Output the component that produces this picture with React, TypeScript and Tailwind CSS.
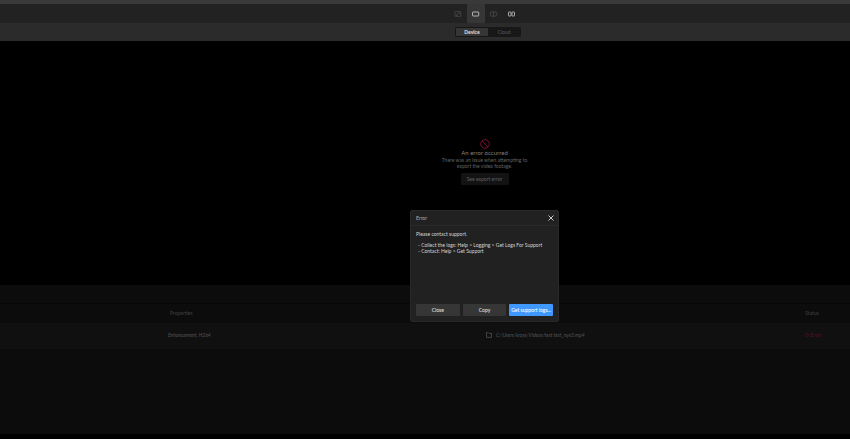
import React from 'react';

type ViewMode = 'crop' | 'single' | 'split' | 'side';

const views: { id: ViewMode; label: string; className: string }[] = [
  { id: 'crop', label: 'Crop', className: 'text-[#4a4a4a]' },
  { id: 'single', label: 'Single view', className: 'bg-[#363636] text-[#d4d4d4]' },
  { id: 'split', label: 'Split view', className: 'text-[#4a4a4a]' },
  { id: 'side', label: 'Side by side', className: 'text-[#c8c8c8]' },
];

const ViewIcon: React.FC<{ mode: ViewMode }> = ({ mode }) => (
  <svg width="8" height="6" viewBox="0 0 8 6" fill="none" stroke="currentColor" strokeWidth="0.8">
    {mode === 'crop' && (
      <>
        <rect x="1" y="0.6" width="5.8" height="4.8" rx="0.4" />
        <path d="M2.4 4.4 5.4 1.6M4 1.6h1.4V3M2.4 3v1.4H4" strokeWidth="0.6" />
      </>
    )}
    {mode === 'single' && <rect x="0.5" y="1" width="6.2" height="4" rx="0.6" />}
    {mode === 'split' && (
      <>
        <rect x="0.5" y="1" width="6.2" height="4" rx="0.6" />
        <path d="M3.6 0v6" />
      </>
    )}
    {mode === 'side' && (
      <>
        <rect x="0.5" y="1" width="2.5" height="4" rx="0.4" />
        <rect x="4" y="1" width="2.5" height="4" rx="0.4" />
      </>
    )}
  </svg>
);

const Toolbar: React.FC = () => (
  <header>
    <div className="h-1 bg-[#393939]" />
    <div className="flex h-[19px] justify-center bg-[#222222] pl-[120px]">
      {views.map((view) => (
        <button
          key={view.id}
          type="button"
          aria-label={view.label}
          className={`flex w-[18px] items-center justify-center ${view.className}`}
        >
          <ViewIcon mode={view.id} />
        </button>
      ))}
    </div>
    <div className="flex h-[18px] items-center justify-center bg-[#2b2b2b] pl-[126px]">
      <div className="flex h-[10px] w-[66px] rounded-[2px] bg-[#171717] p-px">
        <button type="button" className="flex-1 rounded-[1px] bg-[#363636] font-bold text-[#e4e4e4]">
          Device
        </button>
        <button type="button" className="flex-1 text-[#5c5c5c]">
          Cloud
        </button>
      </div>
    </div>
  </header>
);

const Preview: React.FC = () => (
  <section className="flex h-[244px] flex-col items-center bg-black pt-[98px] pl-[119px] text-center">
    <svg width="10" height="10" viewBox="0 0 10 10" fill="none" stroke="#780f30" strokeWidth="1">
      <circle cx="5" cy="5" r="4.3" />
      <path d="m2 2 6 6" />
    </svg>
    <h2 className="text-[6px] leading-[8px] text-[#808080]">An error occurred</h2>
    <p className="w-[88px] leading-[6px] text-[#626262]">
      There was an issue when attempting to export the video footage.
    </p>
    <button type="button" className="mt-1 h-3 w-12 rounded-[1px] bg-[#131313] text-[#626262]">
      See export error
    </button>
  </section>
);

const ExportTable: React.FC = () => (
  <section className="h-[149px] bg-[#0c0c0c] pt-[18px]">
    <table className="w-full table-fixed text-left">
      <thead>
        <tr className="h-[19px] border-t border-[#060606] text-[#404040]">
          <th className="w-[486px] pl-[170px] font-normal">Properties</th>
          <th aria-label="File" />
          <th className="w-[45px] font-normal">Status</th>
        </tr>
      </thead>
      <tbody>
        <tr className="h-[26px] bg-[#101010] text-[#545454]">
          <td className="pb-[2px] pl-[168px] italic">Enhancement, H264</td>
          <td className="pb-[2px]">
            <div className="flex items-center gap-1 italic">
              <svg width="6" height="6" viewBox="0 0 6 6" fill="none" stroke="#5a5a5a" strokeWidth="0.7">
                <path d="M.5.6h1.8l.7.8h2.5v4h-5z" strokeLinejoin="round" />
              </svg>
              C:/Users/krzys/Videos/test test_nyx3.mp4
            </div>
          </td>
          <td className="pb-[2px] text-[#600d24]">
            <div className="flex items-center gap-px">
              <svg width="4" height="4" viewBox="0 0 4 4" fill="none" stroke="currentColor" strokeWidth="0.5">
                <circle cx="2" cy="2" r="1.6" />
                <path d="M2 1v1.2M2 2.6v.4" />
              </svg>
              Error
            </div>
          </td>
        </tr>
      </tbody>
    </table>
  </section>
);

const DialogButton: React.FC<{ title: string; primary?: boolean }> = ({ title, primary }) => (
  <button
    type="button"
    className={`h-3 flex-1 rounded-[1px] font-medium whitespace-nowrap ${
      primary ? 'bg-[#4098ff] text-white' : 'bg-[#363636] text-[#e0e0e0]'
    }`}
  >
    {title}
  </button>
);

const ErrorDialog: React.FC = () => (
  <div className="absolute inset-0 flex items-start justify-center pt-[210px] pl-[119px]">
    <div
      role="dialog"
      aria-labelledby="error-title"
      className="flex h-[112px] w-[149px] flex-col rounded-[2px] border border-[#292929] bg-[#212121]"
    >
      <div className="flex h-[15px] items-center justify-between border-b border-[#2b2b2b] pr-1 pl-[5px]">
        <h1 id="error-title" className="text-[#b0b0b0]">
          Error
        </h1>
        <button type="button" aria-label="Close dialog">
          <svg width="6" height="6" viewBox="0 0 6 6" stroke="#dddddd" strokeWidth="0.9">
            <path d="m.5.5 5 5m0-5-5 5" />
          </svg>
        </button>
      </div>
      <div className="flex-1 px-[5px] pt-[5px] leading-[6px] text-[#d4d4d4]">
        <p>Please contact support.</p>
        <ul className="mt-[5px] pl-[2px]">
          <li>- Collect the logs: Help &gt; Logging &gt; Get Logs For Support</li>
          <li>- Contact: Help &gt; Get Support</li>
        </ul>
      </div>
      <div className="flex gap-[3px] px-[5px] pb-[5px]">
        <DialogButton title="Close" />
        <DialogButton title="Copy" />
        <DialogButton title="Get support logs..." primary />
      </div>
    </div>
  </div>
);

export default function App() {
  return (
    <main className="relative min-h-screen overflow-hidden bg-black font-['Lato',sans-serif] text-[5px] leading-[6px]">
      <Toolbar />
      <Preview />
      <ExportTable />
      <ErrorDialog />
    </main>
  );
}
